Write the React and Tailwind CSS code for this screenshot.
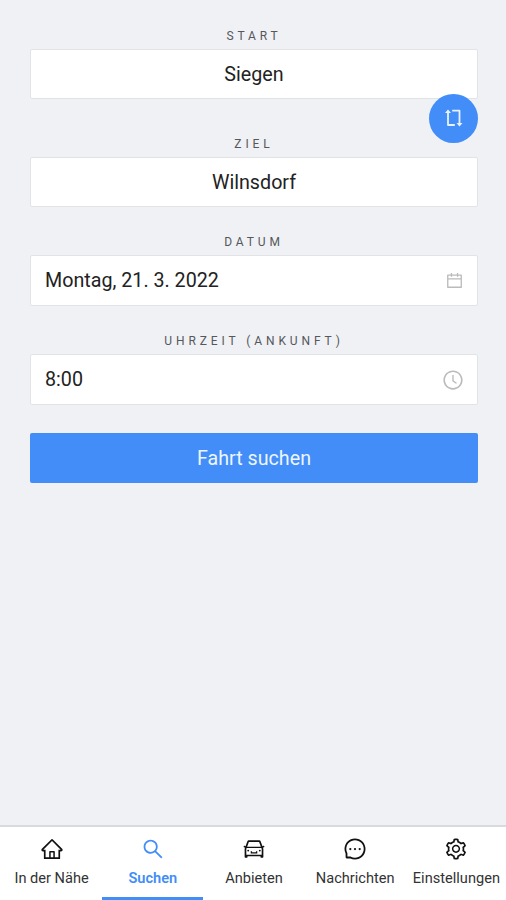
import React, { useState } from 'react';
import {
  AiOutlineHome,
  AiOutlineSearch,
  AiOutlineCar,
  AiOutlineMessage,
  AiOutlineSetting,
  AiOutlineCalendar,
  AiOutlineClockCircle,
} from 'react-icons/ai';

const TABS = [
  { id: 'nearby', label: 'In der Nähe', icon: AiOutlineHome },
  { id: 'search', label: 'Suchen', icon: AiOutlineSearch },
  { id: 'offer', label: 'Anbieten', icon: AiOutlineCar },
  { id: 'messages', label: 'Nachrichten', icon: AiOutlineMessage },
  { id: 'settings', label: 'Einstellungen', icon: AiOutlineSetting },
];

function SwapIcon() {
  return (
    <svg width="20" height="20" viewBox="0 0 20 20" fill="none" stroke="currentColor" strokeWidth="1.8" strokeLinejoin="round">
      <path d="M5 4V17H11.8" />
      <path d="M9.2 2.6H16.5V15.5" />
      <path d="M2 5L5 1.6L8 5Z" fill="currentColor" stroke="none" />
      <path d="M13.5 15L16.5 18.4L19.5 15Z" fill="currentColor" stroke="none" />
    </svg>
  );
}

function Label({ children }) {
  return <div className="h-[29px] pt-[7px] text-center text-[12px] leading-[18px] tracking-[3.9px] uppercase text-[#55575b]">{children}</div>;
}

export default function App() {
  const [active, setActive] = useState('search');
  const [start, setStart] = useState('Siegen');
  const [target, setTarget] = useState('Wilnsdorf');

  const swap = () => {
    setStart(target);
    setTarget(start);
  };

  return (
    <div className="h-screen flex flex-col overflow-hidden bg-[#eff1f5] font-[Roboto,sans-serif] text-[#222]">
      <main className="flex-1 pl-[30px] pr-7 pt-5">
        <div className="relative">
          <Label>Start</Label>
          <div className="h-[50px] pt-0.5 flex items-center justify-center bg-white border border-[#e1e3e6] rounded-xs text-[19.7px]">{start}</div>
          <button onClick={swap} className="absolute right-0 top-[73.5px] w-[49.5px] h-[49.5px] flex items-center justify-center rounded-full bg-[#428df7] text-[#e8f2ff]">
            <SwapIcon />
          </button>
        </div>

        <div className="mt-[29px]">
          <Label>Ziel</Label>
          <div className="h-[50px] pt-0.5 flex items-center justify-center bg-white border border-[#e1e3e6] rounded-xs text-[19.7px]">{target}</div>
        </div>

        <div className="mt-[19px]">
          <Label>Datum</Label>
          <div className="h-[51px] pl-3.5 pr-[13px] flex items-center justify-between bg-white border border-[#e1e3e6] rounded-xs text-[19.7px]">
            <span>Montag, 21. 3. 2022</span>
            <AiOutlineCalendar className="text-[#bbb]" size={19} />
          </div>
        </div>

        <div className="mt-[19px]">
          <Label>Uhrzeit (Ankunft)</Label>
          <div className="h-[51px] pl-3.5 pr-[13px] flex items-center justify-between bg-white border border-[#e1e3e6] rounded-xs text-[19.7px]">
            <span>8:00</span>
            <AiOutlineClockCircle className="text-[#bbb]" size={22} />
          </div>
        </div>

        <button className="mt-7 w-full h-[50px] pt-px rounded-xs bg-[#428df7] text-[#edf5ff] text-[19.7px]">Fahrt suchen</button>
      </main>

      <nav className="h-[75px] -mr-px pl-px grid grid-cols-5 bg-white border-t-2 border-[#d9dadd]">
        {TABS.map(({ id, label, icon: Icon }) => (
          <button
            key={id}
            onClick={() => setActive(id)}
            className={`flex flex-col items-center pt-2.5 border-b-3 whitespace-nowrap text-[14.6px] leading-5 ${
              active === id ? 'text-[#428df7] font-semibold border-[#428df7]' : 'text-[#333] border-transparent'
            }`}
          >
            <Icon size={24} className={active === id ? '' : 'text-[#111]'} />
            <span className="mt-[7px]">{label}</span>
          </button>
        ))}
      </nav>
    </div>
  );
}
